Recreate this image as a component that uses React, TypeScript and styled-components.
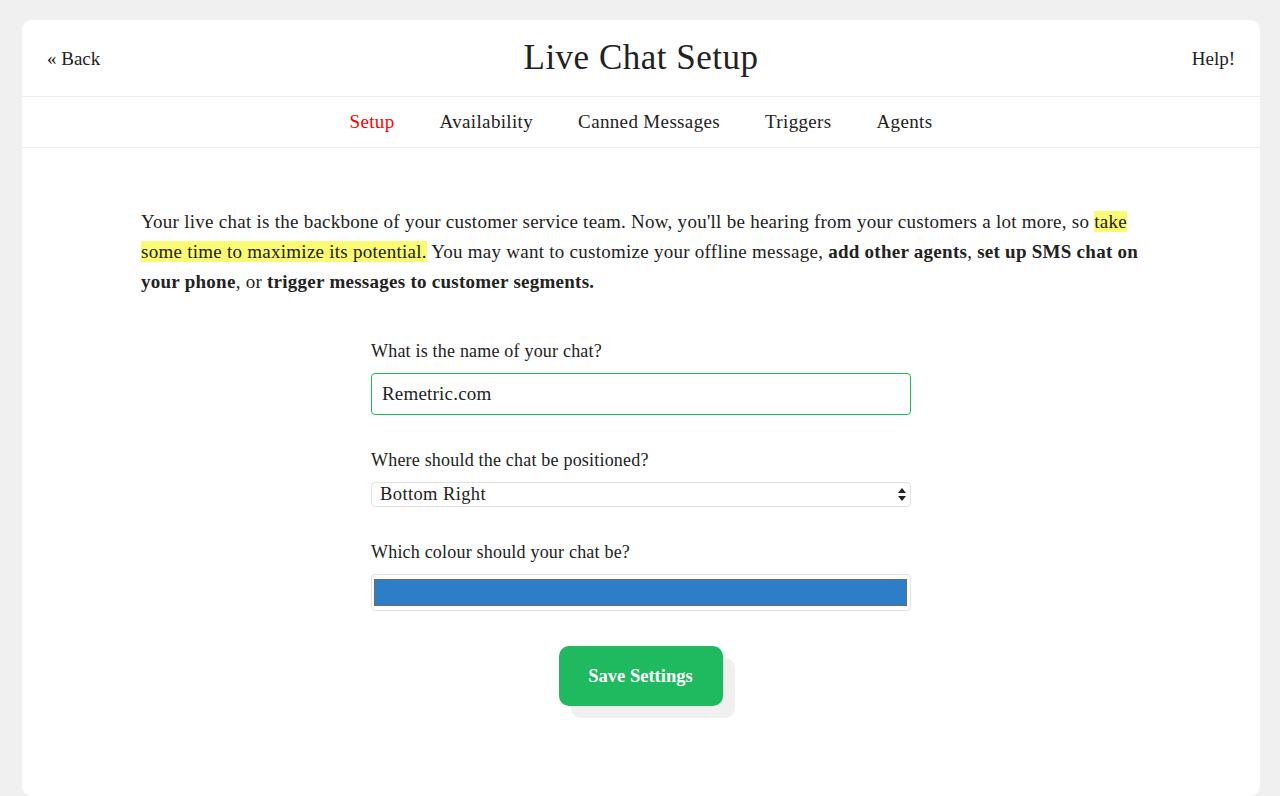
import React from "react";
import styled, { createGlobalStyle } from "styled-components";

const Global = createGlobalStyle`
  html, body { margin: 0; padding: 0; background: #f0f0f0; }
  body { font-family: "Liberation Serif", "DejaVu Serif", serif; color: #222; }
  * { box-sizing: border-box; }
`;

const Page = styled.div`
  padding: 20px 20px 0 22px;
  height: 796px;
  overflow: hidden;
`;

const Card = styled.div`
  background: #fff;
  border-radius: 10px;
  width: 1238px;
  min-height: 776px;
  display: flex;
  flex-direction: column;
`;

const Header = styled.header`
  height: 77px;
  display: grid;
  grid-template-columns: 1fr auto 1fr;
  align-items: center;
  padding: 0 25px;
  border-bottom: 1px solid #eee;
`;

const HeaderLink = styled.a<{ $align: "left" | "right" }>`
  font-size: 19px;
  color: #222;
  text-decoration: none;
  justify-self: ${(p) => (p.$align === "left" ? "start" : "end")};
  padding-top: 2px;
`;

const Title = styled.h1`
  margin: 0;
  font-weight: normal;
  font-size: 35px;
  letter-spacing: 0.5px;
  color: #222;
`;

const Nav = styled.nav`
  height: 51px;
  display: flex;
  justify-content: center;
  align-items: center;
  gap: 45px;
  border-bottom: 1px solid #eee;
`;

const NavItem = styled.a<{ $active?: boolean }>`
  font-size: 19px;
  letter-spacing: 0.35px;
  color: ${(p) => (p.$active ? "#ff0000" : "#222")};
  text-decoration: none;
`;

const Content = styled.main`
  padding: 59px 119px 0 119px;
`;

const Intro = styled.p`
  margin: 0;
  font-size: 19px;
  line-height: 30px;
  letter-spacing: 0.26px;
`;

const Mark = styled.mark`
  background: #fbfb73;
  color: #222;
`;

const Form = styled.form`
  width: 540px;
  margin: 42px auto 0;
  display: flex;
  flex-direction: column;
`;

const Field = styled.div`
  display: flex;
  flex-direction: column;
  margin-bottom: 33px;
`;

const Label = styled.label`
  font-size: 18px;
  letter-spacing: 0.2px;
  line-height: 24px;
  margin-bottom: 10px;
`;

const TextInput = styled.input`
  height: 42px;
  border: 1px solid #1fba5f;
  border-radius: 4px;
  padding: 0 10px;
  font-family: inherit;
  font-size: 19px;
  letter-spacing: 0.2px;
  color: #222;
  outline: none;
`;

const SelectBox = styled.div`
  position: relative;
  height: 25px;
  border: 1px solid #e2e2e2;
  border-radius: 4px;
  display: flex;
  align-items: center;
  padding: 0 8px;
  font-size: 18.5px;
  letter-spacing: 0.4px;
`;

const Arrows = styled.svg`
  position: absolute;
  right: 4px;
  top: 5px;
`;

const ColorBox = styled.div`
  height: 37px;
  border: 1px solid #e2e2e2;
  border-radius: 4px;
  padding: 4px 3px 4px 2px;
  display: flex;
`;

const Swatch = styled.div`
  flex: 1;
  background: #2d7ec8;
  border: 1px solid #6b6b6b;
`;

const ButtonRow = styled.div`
  display: flex;
  justify-content: center;
  margin-top: 2px;
`;

const SaveButton = styled.button`
  width: 164px;
  height: 60px;
  margin-right: 1px;
  background: #1fba5f;
  color: #fff;
  border: none;
  border-radius: 10px;
  font-family: inherit;
  font-weight: bold;
  font-size: 18.5px;
  box-shadow: 12px 12px 0 #f0f0f0;
  cursor: pointer;
`;

export default function App() {
  return (
    <Page>
      <Global />
      <Card>
        <Header>
          <HeaderLink $align="left" href="#">« Back</HeaderLink>
          <Title>Live Chat Setup</Title>
          <HeaderLink $align="right" href="#">Help!</HeaderLink>
        </Header>
        <Nav>
          <NavItem $active href="#">Setup</NavItem>
          <NavItem href="#">Availability</NavItem>
          <NavItem href="#">Canned Messages</NavItem>
          <NavItem href="#">Triggers</NavItem>
          <NavItem href="#">Agents</NavItem>
        </Nav>
        <Content>
          <Intro>
            Your live chat is the backbone of your customer service team. Now, you'll be hearing
            from your customers a lot more, so{" "}
            <Mark>take some time to maximize its potential.</Mark> You may want to customize your
            offline message, <b>add other agents</b>, <b>set up SMS chat on your phone</b>, or{" "}
            <b>trigger messages to customer segments.</b>
          </Intro>
          <Form onSubmit={(e) => e.preventDefault()}>
            <Field>
              <Label>What is the name of your chat?</Label>
              <TextInput defaultValue="Remetric.com" />
            </Field>
            <Field>
              <Label>Where should the chat be positioned?</Label>
              <SelectBox>
                Bottom Right
                <Arrows width="8" height="13" viewBox="0 0 8 13">
                  <path d="M4 0 L8 5 L0 5 Z M0 8 L8 8 L4 13 Z" fill="#222" />
                </Arrows>
              </SelectBox>
            </Field>
            <Field>
              <Label>Which colour should your chat be?</Label>
              <ColorBox>
                <Swatch />
              </ColorBox>
            </Field>
            <ButtonRow>
              <SaveButton type="submit">Save Settings</SaveButton>
            </ButtonRow>
          </Form>
        </Content>
      </Card>
    </Page>
  );
}
